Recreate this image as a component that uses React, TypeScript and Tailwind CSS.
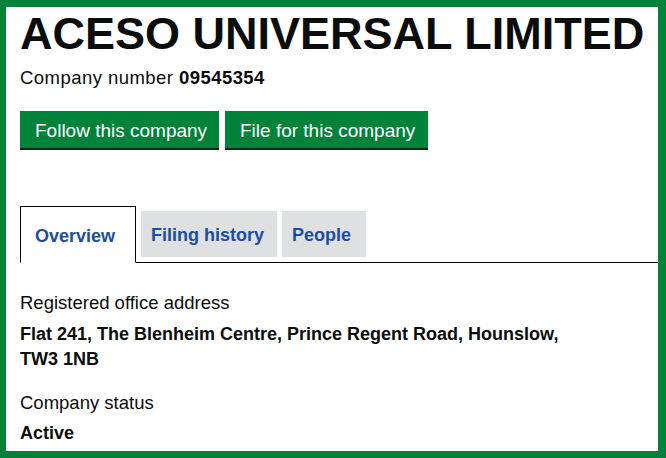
export default function App() {
  const font = { fontFamily: '"Liberation Sans", Arial, sans-serif' };
  return (
    <div
      className="w-[666px] h-[458px] overflow-hidden bg-white border-[#00823b] border-l-[6px] border-t-[7px] border-r-[8px] border-b-[7px] text-[#0b0c0c]"
      style={font}
    >
      <div className="pl-[14px]">
        <h1 className="pt-[2px] text-[45px] leading-[50px] font-bold tracking-[0px] whitespace-nowrap">
          ACESO UNIVERSAL LIMITED
        </h1>
        <p className="mt-[6px] text-[18.5px] leading-[25px] tracking-[0.45px]">
          Company number <strong className="font-bold">09545354</strong>
        </p>
        <div className="mt-[21px] flex gap-[6px]">
          <button className="h-[37px] w-[199px] pl-[15px] pt-[3px] text-left bg-[#00823b] text-white text-[19px] shadow-[0_2px_0_#002d18]">
            Follow this company
          </button>
          <button className="h-[37px] w-[203px] pl-[15px] pt-[3px] text-left bg-[#00823b] text-white text-[19px] shadow-[0_2px_0_#002d18]">
            File for this company
          </button>
        </div>
        <div className="mt-[58px] flex items-start gap-[5px] border-b border-black">
          <div className="h-[57px] w-[116px] -mb-px border border-black border-b-white bg-white pl-[14px] pt-[17px] text-[18px] leading-[25px] font-bold text-[#1d4e9d]">
            Overview
          </div>
          <div className="mt-[5px] h-[46px] w-[136px] bg-[#dee0e2] pl-[10px] pt-[12px] text-[18px] leading-[25px] font-bold text-[#1d4e9d]">
            Filing history
          </div>
          <div className="mt-[5px] h-[46px] w-[84px] bg-[#dee0e2] pl-[10px] pt-[12px] text-[18px] leading-[25px] font-bold text-[#1d4e9d]">
            People
          </div>
        </div>
        <dl className="mt-[27px]">
          <dt className="text-[18.5px] leading-[25px]">Registered office address</dt>
          <dd className="mt-[7px] w-[560px] text-[18px] leading-[25px] font-bold">
            Flat 241, The Blenheim Centre, Prince Regent Road, Hounslow, TW3 1NB
          </dd>
          <dt className="mt-[18px] text-[18.5px] leading-[25px]">Company status</dt>
          <dd className="mt-[6px] text-[18px] leading-[25px] font-bold">Active</dd>
        </dl>
      </div>
    </div>
  );
}
